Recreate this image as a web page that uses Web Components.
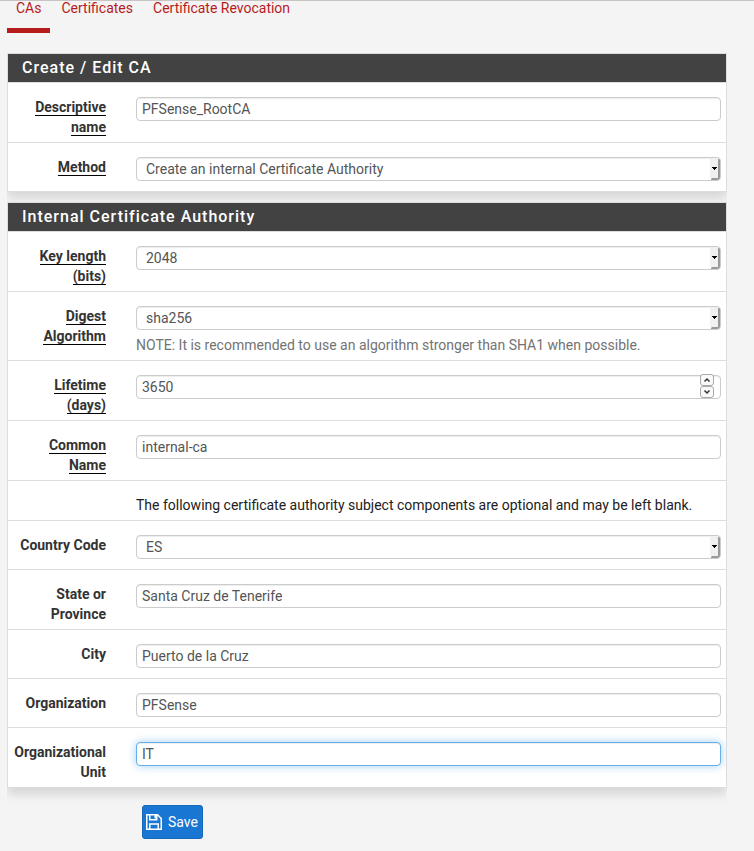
<!DOCTYPE html>
<html lang="en">
<head>
<meta charset="utf-8">
<title>Certificate Authority</title>
<style>
html{background:#f4f4f4}
body{margin:0;font:14px/20px Roboto,"Liberation Sans",sans-serif;color:#333}
</style>
</head>
<body>
<ca-page></ca-page>
<script>
class Base extends HTMLElement{
  render(html){this.attachShadow({mode:'open'}).innerHTML='<style>*{box-sizing:border-box}</style>'+html}
}
customElements.define('tab-link',class extends Base{
  connectedCallback(){
    const active=this.hasAttribute('active');
    this.render(`<style>
      :host{display:block}
      a{display:block;padding:0 9px 13px;line-height:14px;color:#b71c1c;text-decoration:none;border-bottom:5px solid transparent}
      a.on{border-color:#b71c1c}
    </style><a href="#" class="${active?'on':''}"><slot></slot></a>`);
  }
});
customElements.define('form-panel',class extends Base{
  connectedCallback(){
    this.render(`<style>
      :host{display:block;background:#fff;border:1px solid #ddd;box-shadow:0 6px 10px rgba(0,0,0,.13);clip-path:inset(0 0 -24px 0)}
      h2{margin:0;padding:0 14px;height:28px;font-size:16px;line-height:28px;font-weight:500;letter-spacing:1px;color:#fff;background:#424242}
    </style><section><h2>${this.getAttribute('heading')}</h2><slot></slot></section>`);
  }
});
customElements.define('form-row',class extends Base{
  connectedCallback(){
    const get=n=>this.getAttribute(n)||'';
    const type=get('type'),value=get('value'),note=get('note');
    let control='';
    if(type==='select')control=`<div class="wrap"><select id="c"><option>${value}</option></select><svg class="drop" viewBox="0 0 10 22" aria-hidden="true"><path fill="#f0f0f0" d="M0 0h8v20H0z"/><path fill="#999" d="M8 1h1.500v1H10v17q0 3-3 3H1v-1l1-1h6z"/><path fill="#000" d="M2 9h5v1H6v1H5v1H4v-1H3v-1H2z"/></svg></div>`;
    else if(type==='text')control=`<p><slot></slot></p>`;
    else if(type==='number')control=`<div class="wrap"><input id="c" type="number" value="${value}"><div class="spin"><button type="button" aria-label="Increase"><svg viewBox="0 0 12 10"><path d="M3.500 6.500l2.500-2.500 2.500 2.500"/></svg></button><button type="button" aria-label="Decrease"><svg viewBox="0 0 12 10"><path d="M3.500 3.500l2.500 2.500 2.500-2.500"/></svg></button></div></div>`;
    else control=`<input id="c" type="text" value="${value}" class="${this.hasAttribute('focused')?'focus':''}">`;
    this.render(`<style>
      :host{display:grid;grid-template-columns:93px minmax(0,1fr);column-gap:30px;padding:14px 5px 0;border-top:1px solid #ddd}
      label{font-weight:700;text-align:right;padding-bottom:5px;color:#333}
      label span{border-bottom:1px solid #000}
      .field{padding-bottom:10px}
      .field.tight{padding-bottom:5px}
      input,select{display:block;width:100%;height:24px;margin:0;padding:0 5px;font:inherit;color:#555;background:#fff;border:1px solid #ccc;border-radius:4px;box-shadow:inset 0 1px 1px rgba(0,0,0,.075);outline:0;appearance:none}
      select{padding:0 20px 0 9px}
      input[type=number]{appearance:textfield}
      input::-webkit-inner-spin-button{appearance:none;margin:0}
      .focus{border-color:#66afe9;box-shadow:inset 0 1px 1px rgba(0,0,0,.075),0 0 8px rgba(102,175,233,.6)}
      .wrap{position:relative}
      .drop{position:absolute;right:1px;top:1px;width:10px;height:22px;pointer-events:none}
      .spin{position:absolute;right:7px;top:-1px;display:grid}
      button{display:block;width:14px;height:12px;padding:0;border:1px solid #aaa;border-radius:3px;background:#fafafa}
      button svg{display:block;width:12px;height:10px;fill:none;stroke:#333;stroke-width:1.500}
      p{margin:0;color:#212121}
      .note{margin-top:5px;color:#737373}
    </style>
    ${get('label')?`<label for="c">${this.hasAttribute('required')?'<span>':''}${get('label')}${this.hasAttribute('required')?'</span>':''}</label>`:'<div></div>'}
    <div class="field ${note||type==='text'?'tight':''}">${control}${note?`<div class="note">${note}</div>`:''}</div>`);
  }
});
customElements.define('save-button',class extends Base{
  connectedCallback(){
    this.render(`<style>
      :host{display:block}
      button{display:flex;align-items:center;gap:6px;height:34px;padding:0 4px 0 3px;font:inherit;color:#fff;background:#1976d2;border:1px solid #1668b8;border-radius:3px}
      svg{width:16px;height:16px;fill:none;stroke:#fff;stroke-width:1.500}
    </style><button type="submit"><svg viewBox="0 0 16 16" aria-hidden="true"><path d="M.75.75h10.750l3.750 3.750v10.750H.75zM3.750.75v5h7v-5M3.750 15v-5h8.500v5"/><path d="M8.500 1h1.500v3.500H8.500z" fill="#fff" stroke="none"/></svg><slot></slot></button>`);
  }
});
customElements.define('ca-page',class extends Base{
  connectedCallback(){
    this.render(`<style>
      :host{display:block;border-top:1px solid #c8c4c4}
      nav{display:flex;gap:2px;padding:0 7px}
      form{display:flex;flex-direction:column;gap:10px;padding:20px 27px 12px 7px}
      save-button{margin:7px 0 0 135px}
    </style>
    <nav><tab-link active>CAs</tab-link><tab-link>Certificates</tab-link><tab-link>Certificate Revocation</tab-link></nav>
    <form>
      <form-panel heading="Create / Edit CA">
        <form-row label="Descriptive name" required value="PFSense_RootCA"></form-row>
        <form-row label="Method" required type="select" value="Create an internal Certificate Authority"></form-row>
      </form-panel>
      <form-panel heading="Internal Certificate Authority">
        <form-row label="Key length (bits)" required type="select" value="2048"></form-row>
        <form-row label="Digest Algorithm" required type="select" value="sha256" note="NOTE: It is recommended to use an algorithm stronger than SHA1 when possible."></form-row>
        <form-row label="Lifetime (days)" required type="number" value="3650"></form-row>
        <form-row label="Common Name" required value="internal-ca"></form-row>
        <form-row type="text">The following certificate authority subject components are optional and may be left blank.</form-row>
        <form-row label="Country Code" type="select" value="ES"></form-row>
        <form-row label="State or Province" value="Santa Cruz de Tenerife"></form-row>
        <form-row label="City" value="Puerto de la Cruz"></form-row>
        <form-row label="Organization" value="PFSense"></form-row>
        <form-row label="Organizational Unit" value="IT" focused></form-row>
      </form-panel>
      <save-button>Save</save-button>
    </form>`);
  }
});
</script>
</body>
</html>
